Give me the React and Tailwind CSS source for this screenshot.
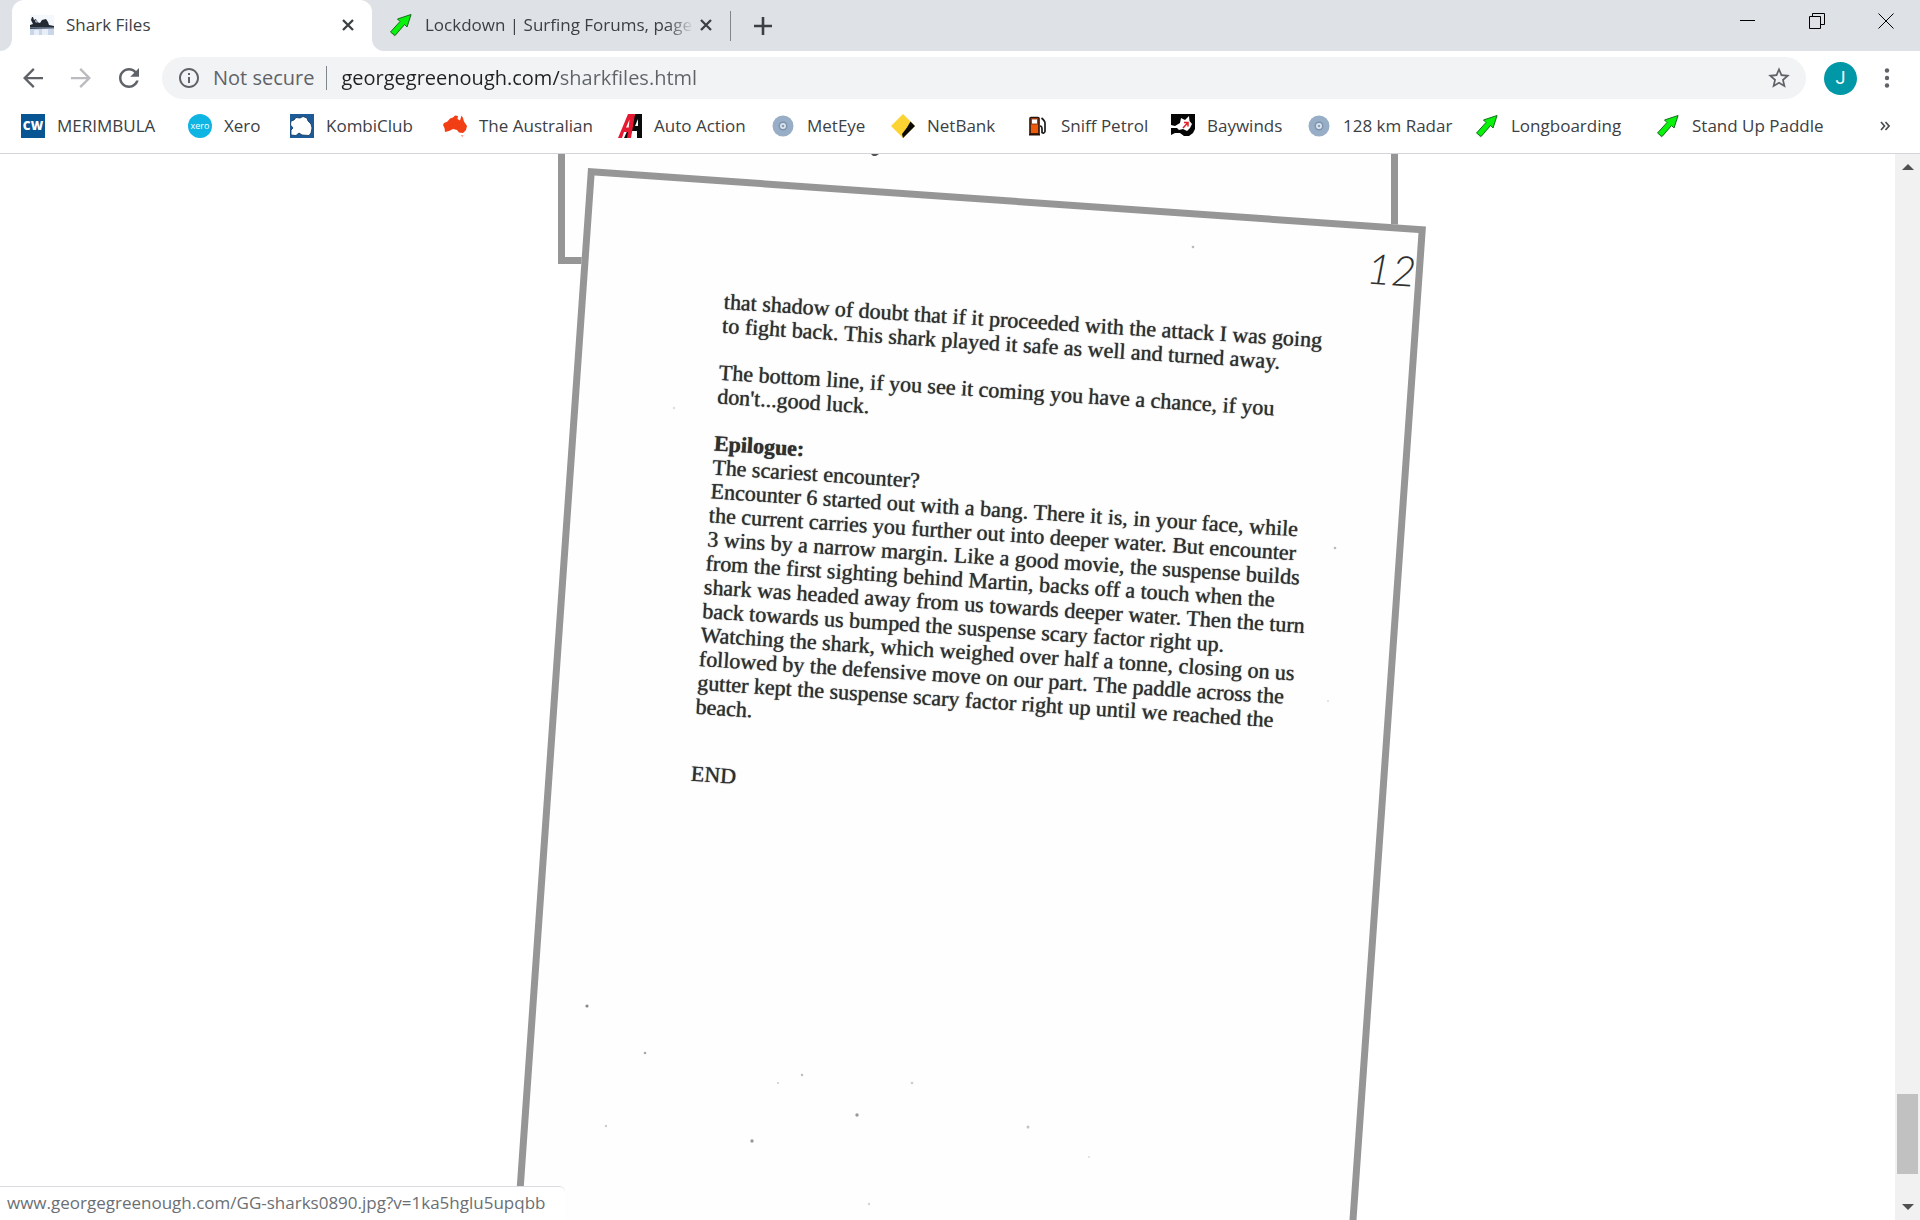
import React, { useState } from 'react';

const SurfArrowIcon = () => (
  <svg viewBox="0 0 24 24" className="w-6 h-6 shrink-0">
    <path d="M5 24 L2 19 L12 8.5 L10 6 L23 1.500 L18.500 14 L16 12 L7 22.500 Z" fill="#9aa0a6" opacity=".35" />
    <path d="M1.500 19 L11 8.500 L8.500 6 L22 1.500 L18 14 L15.500 11.500 L6 22.500 Z" fill="#08f20c" stroke="#13701a" strokeWidth="1" />
  </svg>
);

const SharkIcon = () => (
  <svg viewBox="0 0 24 20" className="w-6 h-5 shrink-0">
    <rect width="24" height="20" fill="#f4f7fb" />
    <rect y="12" width="24" height="8" fill="#c9d6ea" />
    <path d="M4 15h5v5H4zM12 14h6v6h-6z" fill="#e8eef7" />
    <path d="M0 12l0-2 3-1-2-4 1-3 1 0 1 3 2-1 1 3 3 1 2-3 4-1 2 3 1 3 5 1 0 2-24 1z" fill="#232a33" />
    <path d="M0 12h24v1.500H0z" fill="#5c6b7d" />
    <path d="M5 5l3 1-1 2-2-1z" fill="#8ea2bb" />
  </svg>
);

const MerimbulaIcon = () => (
  <svg viewBox="0 0 24 24" className="w-6 h-6 shrink-0">
    <rect width="24" height="24" fill="#075593" />
    <text x="12" y="16" textAnchor="middle" fontFamily="Open Sans, sans-serif" fontWeight="800" fontSize="12" fill="#fff">CW</text>
  </svg>
);

const XeroIcon = () => (
  <svg viewBox="0 0 24 24" className="w-6 h-6 shrink-0">
    <circle cx="12" cy="12" r="12" fill="#0fb5e2" />
    <text x="12" y="15" textAnchor="middle" fontFamily="Open Sans, sans-serif" fontSize="9" fill="#fff">xero</text>
  </svg>
);

const KombiIcon = () => (
  <svg viewBox="0 0 24 24" className="w-6 h-6 shrink-0">
    <rect width="24" height="24" fill="#1c5a98" />
    <path d="M1 21 L1 16 L3 14 L0.500 11 L1 7 L4 6 L6 3.500 L10 4 L13 2.500 L17 4 L18 7 L21 10 L22 14 L21 19 L19 21.500 L12 21 L9 19 L6 21.500 Z" fill="#fff" stroke="#0e3359" strokeWidth=".8" />
  </svg>
);

const AustralianIcon = () => (
  <svg viewBox="0 0 24 24" className="w-6 h-6 shrink-0">
    <path d="M0 11 L1 9 L4.500 7.500 L7 4.500 L10 3.500 L12 1.500 L15 2 L14.500 5 L17 6.500 L18.500 1.500 L20 4 L21 7.500 L24 12 L23 16 L20 19 L16 18.500 L14 16 L10 15 L6 17 L2 18 L1.500 14 Z" fill="#f13e14" />
    <path d="M17.500 21h3l-1 2.500z" fill="#f6a893" />
  </svg>
);

const AutoActionIcon = () => (
  <svg viewBox="0 0 24 24" className="w-6 h-6 shrink-0">
    <path d="M6 24 L17 0 H24 V24 H19 V17 H14 L11 24 Z" fill="#0b0b0b" />
    <path d="M17 12 L20 5 V12 Z" fill="#fff" />
    <path d="M0 24 L10 0 H17 L13 24 H9 L10 18 H6 L4 24 Z" fill="#e51a32" />
    <path d="M8 13.500 L11.500 5.500 L10.700 13.500 Z" fill="#fff" />
  </svg>
);

const BomIcon = () => (
  <svg viewBox="0 0 24 24" className="w-6 h-6 shrink-0">
    <circle cx="12" cy="12" r="10.500" fill="#98aec6" />
    <circle cx="12" cy="12" r="4.500" fill="#7d93ad" />
    <circle cx="12" cy="12" r="3" fill="#dce6f0" />
    <circle cx="12" cy="12" r="1.300" fill="#8a9cb2" />
  </svg>
);

const NetBankIcon = () => (
  <svg viewBox="0 0 24 24" className="w-6 h-6 shrink-0">
    <path d="M12 0 L24 12 L12 24 L0 12 Z" fill="#fbd433" />
    <path d="M19.500 7.500 L24 12 L12 24 L11 20 L16 13.500 Z" fill="#0a0a0a" />
  </svg>
);

const PetrolIcon = () => (
  <svg viewBox="0 0 24 24" className="w-6 h-6 shrink-0">
    <rect x="5" y="3.500" width="9" height="16.500" rx="1" fill="#ec5a0c" stroke="#2b1208" strokeWidth="1.600" />
    <rect x="6.500" y="5" width="6" height="5" fill="#fff" stroke="#7a2c08" strokeWidth=".8" />
    <path d="M4 20.500h11" stroke="#2b1208" strokeWidth="2" />
    <path d="M15 12q2 0 2 3v3.500q2 1.500 3-1V9q0-2-3.500-5" fill="none" stroke="#1d1d1d" strokeWidth="1.700" />
  </svg>
);

const BaywindsIcon = () => (
  <svg viewBox="0 0 24 24" className="w-6 h-6 shrink-0">
    <path d="M0 0H24V15L22 19L18 22H13L9 19L4 19L0 21Z" fill="#050505" />
    <path d="M0 11 L4 12 L9 9 L10 4 L14 6 L18 2 L18.500 7 L21 10 L19 14 L16 17 L12 15 L8 16 L6 14 L0 14 Z" fill="#fff" />
    <path d="M12 14 L17 8.500 M13 8.500h4v4" fill="none" stroke="#e0202c" strokeWidth="1.500" />
  </svg>
);

const bookmarks = [
  { name: 'MERIMBULA', Icon: MerimbulaIcon },
  { name: 'Xero', Icon: XeroIcon },
  { name: 'KombiClub', Icon: KombiIcon },
  { name: 'The Australian', Icon: AustralianIcon },
  { name: 'Auto Action', Icon: AutoActionIcon },
  { name: 'MetEye', Icon: BomIcon },
  { name: 'NetBank', Icon: NetBankIcon },
  { name: 'Sniff Petrol', Icon: PetrolIcon },
  { name: 'Baywinds', Icon: BaywindsIcon },
  { name: '128 km Radar', Icon: BomIcon },
  { name: 'Longboarding', Icon: SurfArrowIcon },
  { name: 'Stand Up Paddle', Icon: SurfArrowIcon },
];

const paragraphs = [
  [
    'that shadow of doubt that if it proceeded with the attack I was going',
    'to fight back. This shark played it safe as well and turned away.',
  ],
  [
    'The bottom line, if you see it coming you have a chance, if you',
    "don't...good luck.",
  ],
  [
    'Epilogue:',
    'The scariest encounter?',
    'Encounter 6 started out with a bang. There it is, in your face, while',
    'the current carries you further out into deeper water. But encounter',
    '3 wins by a narrow margin. Like a good movie, the suspense builds',
    'from the first sighting behind Martin, backs off a touch when the',
    'shark was headed away from us towards deeper water. Then the turn',
    'back towards us bumped the suspense scary factor right up.',
    'Watching the shark, which weighed over half a tonne, closing on us',
    'followed by the defensive move on our part. The paddle across the',
    'gutter kept the suspense scary factor right up until we reached the',
    'beach.',
  ],
];

// Scanner dust, x / y / radius / opacity
const specks = [
  [587, 852, 1.6, 0.7], [645, 899, 1.3, 0.5], [802, 921, 1.2, 0.4], [857, 961, 1.7, 0.6],
  [752, 987, 1.7, 0.6], [778, 929, 1, 0.3], [912, 929, 1.3, 0.3], [1028, 973, 1.5, 0.35],
  [1193, 93, 1.3, 0.4], [1335, 394, 1.3, 0.4], [606, 972, 1.2, 0.3], [674, 254, 1.2, 0.2],
  [1328, 547, 1, 0.2], [1089, 1003, 1, 0.2], [869, 1050, 1.2, 0.25], [1270, 207, 1, 0.3],
];

const CloseIcon = () => (
  <svg viewBox="0 0 24 24" className="w-6 h-6">
    <path d="M7 7l10 10M17 7L7 17" stroke="#3c4043" strokeWidth="2.300" />
  </svg>
);

const TabStrip = () => (
  <div className="flex h-[51px] bg-[#dee1e6]">
    <div className="flex flex-1 min-w-0 pl-3" role="tablist">
      <div className="relative flex items-center w-[360px] h-[51px] pb-px pl-[18px] pr-3 rounded-t-xl bg-white">
        <svg viewBox="0 0 12 12" className="absolute bottom-0 -left-3 w-3 h-3">
          <path d="M12 0v12H0A12 12 0 0 0 12 0z" fill="#fff" />
        </svg>
        <svg viewBox="0 0 12 12" className="absolute bottom-0 -right-3 w-3 h-3">
          <path d="M0 0v12h12A12 12 0 0 1 0 0z" fill="#fff" />
        </svg>
        <button role="tab" aria-selected="true" className="flex flex-1 items-center gap-3 min-w-0 text-[17px] leading-6 text-[#3c4043]">
          <SharkIcon />
          Shark Files
        </button>
        <button aria-label="Close tab"><CloseIcon /></button>
      </div>
      <div className="flex items-center w-[358px] h-[51px] pb-px pl-[17px] pr-3">
        <button role="tab" aria-selected="false" className="flex flex-1 items-center gap-3 min-w-0 text-[17px] leading-6 text-[#3c4043]">
          <SurfArrowIcon />
          <span className="flex-1 overflow-hidden text-left whitespace-nowrap mask-r-from-90%">
            Lockdown | Surfing Forums, page
          </span>
        </button>
        <button aria-label="Close tab"><CloseIcon /></button>
      </div>
      <div className="w-px h-[30px] mt-[11px] bg-[#80868b]" />
      <button aria-label="New tab" className="ml-5">
        <svg viewBox="0 0 24 24" className="w-6 h-6">
          <path d="M12 3v18M3 12h18" stroke="#3c4043" strokeWidth="2.600" />
        </svg>
      </button>
    </div>
    <div className="flex h-[42px] text-black">
      <button aria-label="Minimize" className="flex items-center justify-center w-[69px]">
        <svg viewBox="0 0 16 16" className="w-4 h-4"><path d="M0 7.500h15" stroke="currentColor" /></svg>
      </button>
      <button aria-label="Restore" className="flex items-center justify-center w-[69px]">
        <svg viewBox="0 0 16 16" className="w-4 h-4">
          <path d="M.5 3.500h11v12H.5zM3.500 3.500v-3h12v11h-4" fill="none" stroke="currentColor" />
        </svg>
      </button>
      <button aria-label="Close" className="flex items-center justify-center w-[69px]">
        <svg viewBox="0 0 16 16" className="w-4 h-4"><path d="M.5.5l15 15M15.500.5l-15 15" stroke="currentColor" /></svg>
      </button>
    </div>
  </div>
);

const Toolbar = () => {
  const [url, setUrl] = useState('georgegreenough.com/sharkfiles.html');

  return (
    <div className="flex items-center gap-[18px] pl-[18px] pr-[21px] py-1.5 text-[#5f6368]">
      <button aria-label="Back">
        <svg viewBox="0 0 24 24" className="w-[30px] h-[30px]" fill="currentColor">
          <path d="M20 11.100H7.600l5.700-5.700L12 4l-8 8 8 8 1.300-1.400-5.700-5.700H20z" />
        </svg>
      </button>
      <button aria-label="Forward" className="text-[#b9bbbe]">
        <svg viewBox="0 0 24 24" className="w-[30px] h-[30px]" fill="currentColor">
          <path d="M4 11.100h12.400l-5.700-5.700L12 4l8 8-8 8-1.300-1.400 5.700-5.700H4z" />
        </svg>
      </button>
      <button aria-label="Reload">
        <svg viewBox="0 0 24 24" className="w-[30px] h-[30px]" fill="currentColor">
          <path d="M17.650 6.350C16.200 4.900 14.210 4 12 4c-4.420 0-7.990 3.580-7.990 8s3.570 8 7.990 8c3.730 0 6.840-2.550 7.730-6h-2.080c-.82 2.330-3.040 4-5.650 4-3.310 0-6-2.690-6-6s2.690-6 6-6c1.660 0 3.140.69 4.220 1.780L13 11h7V4l-2.350 2.350z" />
        </svg>
      </button>
      <form className="flex flex-1 items-center min-w-0 h-[42px] pl-[15px] pr-3.5 rounded-full bg-[#f1f3f4] text-[20px]" onSubmit={e => e.preventDefault()}>
        <button type="button" className="flex items-center gap-3">
          <svg viewBox="0 0 24 24" className="w-6 h-6" fill="currentColor">
            <path d="M11 17h2v-6h-2v6zm1-15C6.480 2 2 6.480 2 12s4.480 10 10 10 10-4.480 10-10S17.520 2 12 2zm0 18c-4.410 0-8-3.590-8-8s3.590-8 8-8 8 3.590 8 8-3.590 8-8 8zM11 9h2V7h-2v2z" />
          </svg>
          Not secure
        </button>
        <div className="w-px h-6 ml-3 mr-3.5 bg-[#80868b]" />
        <input
          aria-label="Address"
          value={url}
          onChange={e => setUrl(e.target.value)}
          className="flex-1 min-w-0 bg-[linear-gradient(90deg,#202124_218px,#5f6368_218px)] bg-clip-text text-transparent outline-none"
        />
        <button type="button" aria-label="Bookmark this page">
          <svg viewBox="0 0 24 24" className="w-[26px] h-[26px]" fill="currentColor">
            <path d="M22 9.240l-7.190-.62L12 2 9.190 8.630 2 9.240l5.460 4.730L5.820 21 12 17.270 18.180 21l-1.630-7.030L22 9.240zM12 15.400l-3.760 2.270 1-4.280-3.320-2.880 4.380-.38L12 6.100l1.710 4.040 4.380.38-3.320 2.880 1 4.280L12 15.400z" />
          </svg>
        </button>
      </form>
      <button className="w-[33px] h-[33px] rounded-full bg-[#0097a7] text-white font-[Roboto,sans-serif] text-[18px] leading-none">J</button>
      <button aria-label="Menu">
        <svg viewBox="0 0 24 24" className="w-6 h-6" fill="currentColor">
          <circle cx="12" cy="4.500" r="2.200" />
          <circle cx="12" cy="12" r="2.200" />
          <circle cx="12" cy="19.500" r="2.200" />
        </svg>
      </button>
    </div>
  );
};

const BookmarksBar = () => (
  <nav className="flex items-center pl-[21px] pr-[30px] pt-[9px] pb-[15px] text-[17px] leading-6 text-[#3c4043] border-b border-[#d3d5d8]">
    <div className="grid flex-1 grid-cols-[167px_102px_153px_175px_153px_120px_134px_146px_136px_168px_181px_auto]">
      {bookmarks.map(({ name, Icon }) => (
        <a key={name} href="#" className="flex items-center gap-3 whitespace-nowrap">
          <Icon />
          {name}
        </a>
      ))}
    </div>
    <button aria-label="More bookmarks">
      <svg viewBox="0 0 10 10" className="w-2.5 h-2.5">
        <path d="M1 1l3.500 4L1 9M5.500 1L9 5 5.500 9" fill="none" stroke="#4a4d51" strokeWidth="1.700" />
      </svg>
    </button>
  </nav>
);

const Scrollbar = () => (
  <div className="flex flex-col items-center w-[25px] bg-[#f1f1f1]">
    <button aria-label="Scroll up" className="flex items-center justify-center w-full h-[26px]">
      <svg viewBox="0 0 12 6" className="w-3 h-1.5"><path d="M6 0l6 6H0z" fill="#505050" /></svg>
    </button>
    <div className="flex-1" />
    <div className="w-[21px] h-20 mb-5 bg-[#c1c1c1]" />
    <button aria-label="Scroll down" className="flex items-center justify-center w-full h-[26px]">
      <svg viewBox="0 0 12 6" className="w-3 h-1.5"><path d="M0 0h12L6 6z" fill="#505050" /></svg>
    </button>
  </div>
);

const ScannedPages = () => (
  <main className="relative flex-1 min-w-0 overflow-hidden bg-white">
    <div className="w-[840px] mx-auto translate-x-[30px]">
      {/* Bottom of page 11 */}
      <a href="#" aria-label="Page 11" className="block h-[110px] bg-[#fefefe] border-x-7 border-b-7 border-[#969696]" />
      {/* Page 12 */}
      <a
        href="#"
        className="block w-[840px] h-[1200px] ml-[30px] -mt-24 origin-top-left rotate-4 bg-[#fefefe] border-7 border-[#969696] text-[#303030]"
      >
        <div className="flex justify-end h-[105px] pt-3 font-[Lato,sans-serif] font-light italic text-[42px] leading-[52px]">
          12
        </div>
        <div className="flex flex-col gap-[23px] pl-[138px] font-['Liberation_Serif',serif] text-[22px] leading-6 text-shadow-[0_0_1px_#303030]">
          {paragraphs.map((lines, i) => (
            <p key={i}>
              {lines.map(line => (
                <span
                  key={line}
                  className={`block w-[620px] whitespace-nowrap origin-left -rotate-[0.3deg] ${line === 'Epilogue:' ? 'font-bold' : ''}`}
                >
                  {line}
                </span>
              ))}
            </p>
          ))}
          <p className="pt-5">END</p>
        </div>
      </a>
    </div>
    <svg className="absolute inset-0 w-full h-full pointer-events-none">
      {specks.map(([x, y, r, o]) => (
        <circle key={`${x}-${y}`} cx={x} cy={y} r={r} fill="#555" opacity={o} />
      ))}
      <path d="M871 0h8l-3 2h-3z" fill="#555" />
    </svg>
  </main>
);

const App = () => (
  <div className="relative flex flex-col h-screen overflow-hidden bg-white font-['Open_Sans','Noto_Sans',sans-serif]">
    <header>
      <TabStrip />
      <Toolbar />
      <BookmarksBar />
    </header>
    <div className="flex flex-1 min-h-0">
      <ScannedPages />
      <Scrollbar />
    </div>
    <div className="absolute bottom-0 left-0 h-[34px] pl-[7px] pr-5 rounded-tr-md border-t border-[#dadce0] bg-white text-[17px] leading-8 text-[#6b6f74]">
      www.georgegreenough.com/GG-sharks0890.jpg?v=1ka5hglu5upqbb
    </div>
  </div>
);

export default App;
